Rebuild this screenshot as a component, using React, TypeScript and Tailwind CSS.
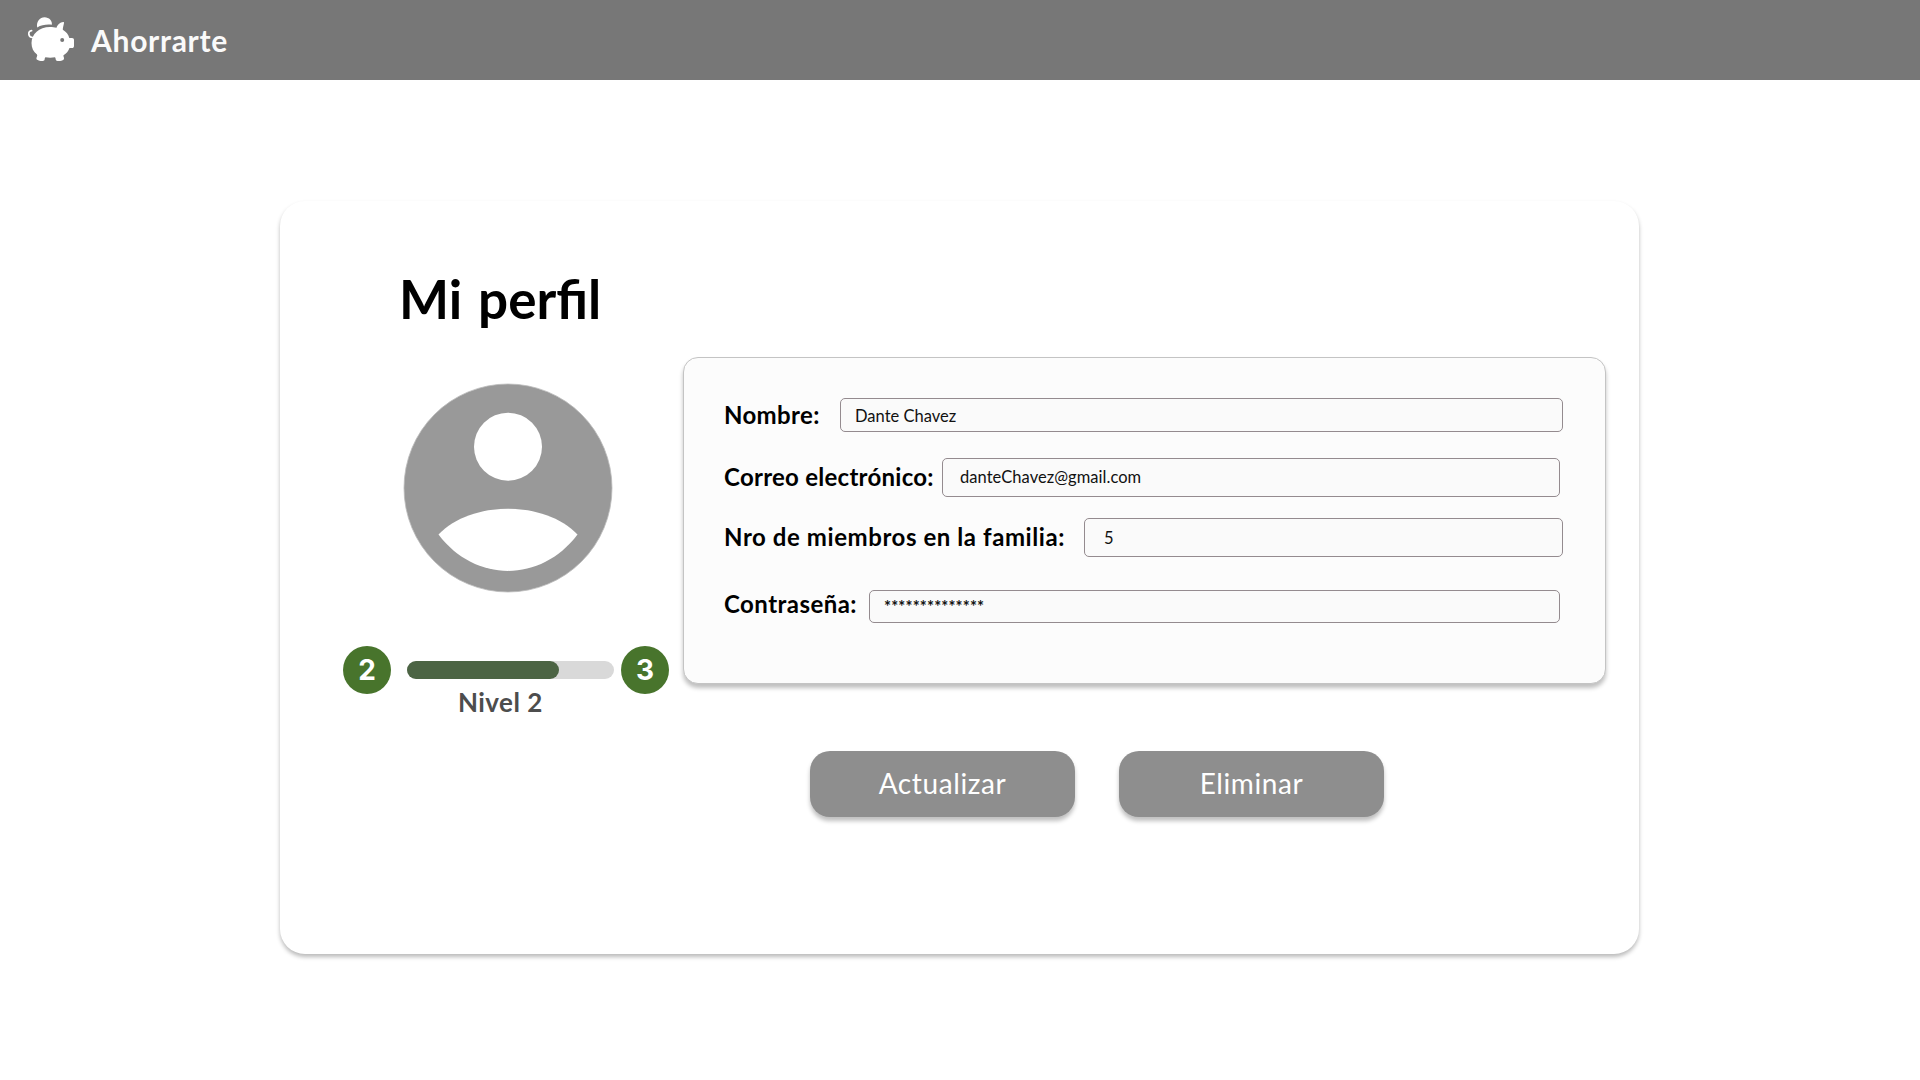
import React from "react";

type TextProps = { children: React.ReactNode; className: string };

function Label({ children, className }: TextProps) {
  return (
    <span className={`block shrink-0 whitespace-nowrap font-bold leading-6 ${className}`}>
      {children}
    </span>
  );
}

function Field({ children, className }: TextProps) {
  return (
    <div
      className={`flex shrink-0 items-center whitespace-nowrap rounded-[5px] border border-[#948b8f] bg-[#fafafa] text-[16.5px] text-[#111] ${className}`}
    >
      {children}
    </div>
  );
}

function LevelBadge({ children, className }: TextProps) {
  return (
    <span
      className={`flex size-12 shrink-0 items-center justify-center rounded-full bg-[#48742c] font-[family-name:Inter] text-[28px] font-bold text-white ${className}`}
    >
      {children}
    </span>
  );
}

function PiggyLogo() {
  return (
    <svg width="60" height="56" viewBox="0 0 60 56" fill="white" aria-hidden="true">
      <path d="M17.200 17.400C16 11.800 19.800 7.300 24.600 7.300C29 7.300 32.600 11 31.800 14.800C26.600 14.200 21.500 15 17.200 17.400Z" />
      <path d="M12.600 27.500C8 27.500 7.500 21 11.600 20.600" fill="none" stroke="white" strokeWidth="1.700" strokeLinecap="round" />
      <path d="M11.500 33C11.500 24 19 17 30 17C32.500 17 34.500 17.200 36.500 17.700C37.500 14.500 40.500 12.200 43.100 12C43.800 12 44.100 12.400 44 13C43.600 15.500 42.800 17.300 42.800 19.800C46.200 22 48.500 24.500 49.300 28H52C53.300 28 54 28.800 54 30V36C54 37.300 53.300 38.100 52 38.100H49.500C48.300 41.500 46.500 43.500 43.500 45.200C43 46 44.300 47.500 44 48.800C43.700 50.300 42 50.700 40 51C38 51.200 36.300 51.200 35.900 50C35.500 49 35.800 48 35 47.200C32 47.800 28.500 47.800 25.400 47.200C24.500 48 24.900 49 24.500 50C23.800 51.200 21.500 51.200 19.500 50.700C17.500 50.200 16.300 49.600 16.400 48.500C16.400 47 17.800 46 17 44.500C13.500 42 11.500 38 11.500 33Z" />
      <circle cx="42.200" cy="30" r="2" fill="#777" />
    </svg>
  );
}

export default function App() {
  return (
    <div className="h-[1080px] w-[1920px] overflow-hidden bg-white font-['Lato',sans-serif] text-black">
      <header className="flex h-20 bg-[#777]">
        <div className="pl-5 pt-2.5"><PiggyLogo /></div>
        <span className="ml-[11px] mt-[21px] block text-[30px] font-bold leading-[38px] tracking-[0.7px] text-[#fafafa]">Ahorrarte</span>
      </header>
      <main className="ml-[280px] mt-[121px] flex h-[753px] w-[1359px] rounded-[25px] bg-white pt-[68px] shadow-[0_3px_4px_rgba(0,0,0,0.27)]">
        <section className="w-[403px] shrink-0">
          <h1 className="ml-[119px] whitespace-nowrap text-[53px] font-bold leading-[60px] [word-spacing:3px]">Mi perfil</h1>
          <svg className="ml-[123px] mt-[54px]" width="210" height="210" viewBox="0 0 210 210" aria-hidden="true">
            <circle cx="105" cy="105" r="104" fill="#999" stroke="#bbb" strokeWidth="0.8" />
            <circle cx="105" cy="63.700" r="34" fill="white" />
            <path d="M35.500 151.500C68 117 142 117 174.500 151.500C138 200 72 200 35.500 151.500Z" fill="white" />
          </svg>
          <div className="ml-[63px] mt-[53px] flex items-center">
            <LevelBadge className="">2</LevelBadge>
            <div className="ml-4 h-[18px] w-[207px] shrink-0 rounded-full bg-[#d9d9d9]">
              <div className="h-full w-[152px] rounded-full bg-[#4c6444]" />
            </div>
            <LevelBadge className="ml-[7px]">3</LevelBadge>
          </div>
          <p className="ml-[178px] mt-[-2px] text-[26px] font-bold leading-[20px] tracking-[0.45px] text-[#4d4d4d]">Nivel 2</p>
        </section>
        <section>
          <div className="mt-[88px] h-[327px] w-[923px] rounded-[15px] border border-[#c4c4c4] bg-[#fcfcfc] pl-10 pt-10 text-[24px] shadow-[0_4px_4px_rgba(0,0,0,0.25)]">
            <div className="flex h-[60px] items-start">
              <Label className="mt-[5px] w-[116px] tracking-[0.35px]">Nombre:</Label>
              <Field className="h-[34px] w-[723px] pl-[14px] pt-[2px]">Dante Chavez</Field>
            </div>
            <div className="flex h-[60px] items-start">
              <Label className="mt-[7px] w-[218px] tracking-[0.26px]">Correo electrónico:</Label>
              <Field className="h-[39px] w-[618px] pb-px pl-[17px] tracking-[0.04px]">danteChavez@gmail.com</Field>
            </div>
            <div className="flex h-[72px] items-start">
              <Label className="mt-[7px] w-[360px] tracking-[0.57px]">Nro de miembros en la familia:</Label>
              <Field className="h-[39px] w-[479px] pl-[19px] pt-[2px]">5</Field>
            </div>
            <div className="flex items-start">
              <Label className="mt-[2px] w-[145px] tracking-[0.45px]">Contraseña:</Label>
              <Field className="h-[33px] w-[691px] pl-[14px] pt-[2px] font-bold tracking-[0.15px]">**************</Field>
            </div>
          </div>
          <div className="ml-[127px] mt-[67px] flex gap-11 text-[28px] tracking-[0.6px] text-white">
            <button className="h-[66px] w-[265px] rounded-[20px] bg-[#8e8e8e] pb-[3px] shadow-[0_4px_4px_rgba(0,0,0,0.25)]">Actualizar</button>
            <button className="h-[66px] w-[265px] rounded-[20px] bg-[#8e8e8e] pb-[3px] shadow-[0_4px_4px_rgba(0,0,0,0.25)]">Eliminar</button>
          </div>
        </section>
      </main>
    </div>
  );
}
